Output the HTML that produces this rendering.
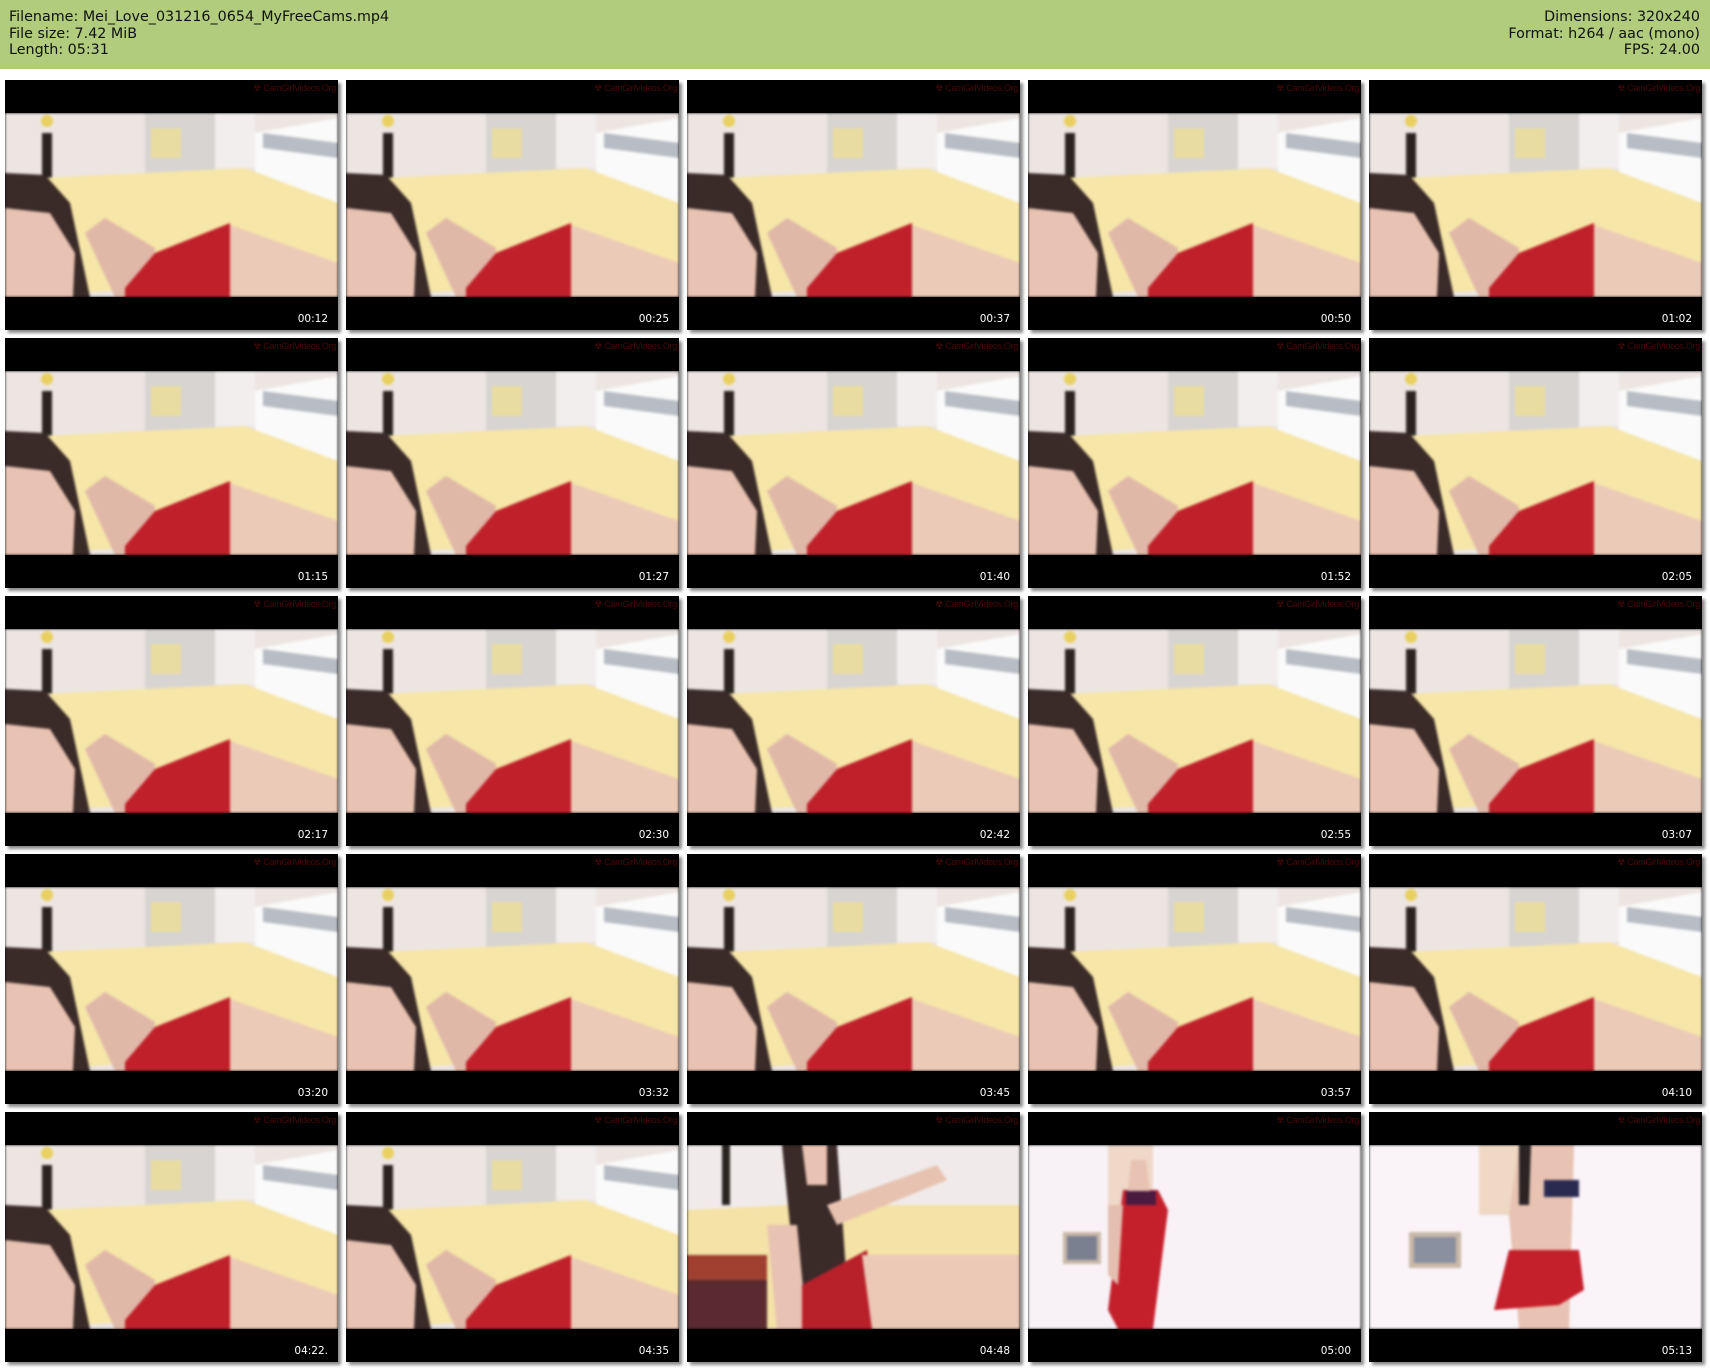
<!DOCTYPE html>
<html><head><meta charset="utf-8"><style>
html,body{margin:0;padding:0;background:#fff;width:1710px;height:1370px;overflow:hidden;position:relative;font-family:"DejaVu Sans","Liberation Sans",sans-serif;}
.hdr{position:absolute;left:0;top:0;width:1710px;height:69px;background:#b0cc7c;color:#111;font-size:14.3px;line-height:16.5px;}
.l{position:absolute;left:9px;top:9px;}
.r{position:absolute;right:10px;top:9px;text-align:right;}
.t{position:absolute;width:333px;height:250px;background:#000;box-shadow:3px 3px 3px #8a8a8a;}
.im{position:absolute;left:0;top:33px;width:333px;height:184px;overflow:hidden;}
.im svg{width:333px;height:184px;display:block;filter:blur(1.2px);}
.wm{position:absolute;right:2px;top:3px;color:#4a0808;font-size:9px;font-family:"Liberation Sans Narrow","Liberation Sans",sans-serif;letter-spacing:-0.3px;}
.ts{position:absolute;right:10px;top:233px;color:#fff;font-size:10.5px;line-height:12px;}
</style></head><body>
<div class="hdr"><div class="l">Filename: Mei_Love_031216_0654_MyFreeCams.mp4<br>File size: 7.42 MiB<br>Length: 05:31</div>
<div class="r">Dimensions: 320x240<br>Format: h264 / aac (mono)<br>FPS: 24.00</div></div>
<svg width="0" height="0" style="position:absolute">
<defs>
<symbol id="a" viewBox="0 0 333 184">
<rect width="333" height="184" fill="#ede5e2"/>
<rect x="140" y="0" width="70" height="60" fill="#d8d4d2"/>
<rect x="146" y="15" width="30" height="30" fill="#e8dca0"/>
<rect x="210" y="0" width="40" height="55" fill="#f2eeee"/>
<polygon points="250,20 333,5 333,95 250,70" fill="#fafafa"/>
<polygon points="258,20 333,30 333,45 258,35" fill="#b8bcc4"/>
<rect x="37" y="20" width="10" height="45" fill="#2a2420"/>
<circle cx="42" cy="8" r="6" fill="#e8d060"/>
<polygon points="35,65 240,55 333,90 333,165 0,184" fill="#f6e6a8"/>
<polygon points="0,60 40,62 65,90 85,184 0,184" fill="#3a2a28"/>
<polygon points="0,95 45,100 70,140 68,184 0,184" fill="#e8c2b2"/>
<polygon points="80,120 100,105 150,135 145,184 110,184" fill="#e0b8a8"/>
<polygon points="120,175 150,140 225,110 225,184 120,184" fill="#c0202a"/>
<polygon points="225,112 333,150 333,184 225,184" fill="#eccab8"/>
</symbol>
<symbol id="b" viewBox="0 0 333 184">
<rect width="333" height="184" fill="#f0ebea"/>
<rect x="35" y="0" width="8" height="60" fill="#2a2420"/>
<polygon points="0,65 100,60 333,60 333,184 0,184" fill="#f4e2a6"/>
<polygon points="0,110 80,110 80,184 0,184" fill="#a04030"/>
<polygon points="0,135 80,135 80,184 0,184" fill="#5a2a30"/>
<polygon points="95,0 150,0 160,140 110,150" fill="#3a2a28"/>
<polygon points="115,0 140,0 140,40 120,40" fill="#e8c2b2"/>
<polygon points="80,80 110,80 120,184 90,184" fill="#e8c2b2"/>
<polygon points="140,60 250,20 260,35 150,80" fill="#e8c2b0"/>
<polygon points="115,140 180,105 190,184 115,184" fill="#b8202a"/>
<polygon points="175,110 333,110 333,184 185,184" fill="#ecc8b6"/>
</symbol>
<symbol id="c" viewBox="0 0 333 184">
<rect width="333" height="184" fill="#f8f2f6"/>
<rect x="80" y="0" width="45" height="60" fill="#efd8c8"/>
<rect x="35" y="87" width="38" height="32" fill="#c8b8a8"/>
<rect x="39" y="91" width="30" height="24" fill="#7a8090"/>
<polygon points="95,45 130,45 140,65 125,184 90,184 80,165" fill="#c4202c"/>
<rect x="98" y="46" width="30" height="14" fill="#4a1a40"/>
<polygon points="103,15 118,15 122,46 100,46" fill="#e8c2b2"/>
<polygon points="80,60 95,60 90,140 80,130" fill="#e4beae"/>
</symbol>
<symbol id="d" viewBox="0 0 333 184">
<rect width="333" height="184" fill="#faf4f8"/>
<rect x="110" y="0" width="45" height="70" fill="#efd8c4"/>
<rect x="40" y="87" width="52" height="36" fill="#c8b8a8"/>
<rect x="45" y="92" width="42" height="26" fill="#8a90a0"/>
<polygon points="150,0 205,0 200,184 150,184 140,70" fill="#e8c2b2"/>
<rect x="175" y="35" width="35" height="17" fill="#2a2a50"/>
<polygon points="150,0 162,0 160,60 150,60" fill="#2a2424"/>
<polygon points="140,105 210,105 215,145 190,160 125,165" fill="#c4202c"/>
</symbol>
</defs></svg>
<div id="g"></div>
<script>
var ts=["00:12","00:25","00:37","00:50","01:02","01:15","01:27","01:40","01:52","02:05","02:17","02:30","02:42","02:55","03:07","03:20","03:32","03:45","03:57","04:10","04:22.","04:35","04:48","05:00","05:13"];
var h="";
for(var i=0;i<25;i++){var c=i%5,r=Math.floor(i/5);var x=5+c*341,y=80+r*258;
var s=i==22?"b":i==23?"c":i==24?"d":"a";
h+='<div class="t" style="left:'+x+'px;top:'+y+'px"><span class="wm">&#x2622; CamGirlVideos.Org</span><div class="im"><svg viewBox="0 0 333 184" preserveAspectRatio="none"><use href="#'+s+'"/></svg></div><span class="ts">'+ts[i]+'</span></div>';}
document.getElementById("g").innerHTML=h;
</script>
</body></html>
